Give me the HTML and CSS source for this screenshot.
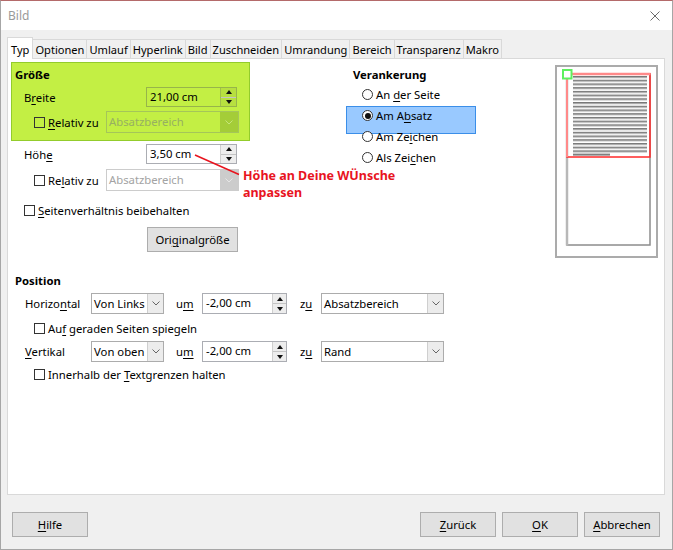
FILE: index.html
```html
<!DOCTYPE html>
<html lang="de">
<head>
    <meta charset="UTF-8">
    <meta name="viewport" content="width=device-width, initial-scale=1.0">
    <title>Bild</title>
    <link rel="stylesheet" href="styles.css">
</head>
<body>
    <div class="dialog">
        <div class="titlebar">
            <span class="title">Bild</span>
            <svg class="close" viewBox="0 0 10 10">
                <path d="M0.5 0.5L9.5 9.5M9.5 0.5L0.5 9.5" stroke="#6b6b6b" stroke-width="1"/>
            </svg>
        </div>

        <div class="tabs">
            <div class="tab active">Typ</div>
            <div class="tab">Optionen</div>
            <div class="tab">Umlauf</div>
            <div class="tab">Hyperlink</div>
            <div class="tab">Bild</div>
            <div class="tab">Zuschneiden</div>
            <div class="tab">Umrandung</div>
            <div class="tab">Bereich</div>
            <div class="tab">Transparenz</div>
            <div class="tab">Makro</div>
        </div>

        <div class="panel">
            <div class="top">
                <!-- Größe -->
                <div class="size-col">
                    <div class="highlight">
                        <div class="heading">Größe</div>
                        <div class="row">
                            <span class="lbl">B<u>r</u>eite</span>
                            <div class="spin">
                                <span class="spin-val">21,00 cm</span>
                                <span class="spin-btns"><i class="up"></i><i class="down"></i></span>
                            </div>
                        </div>
                        <div class="row sub">
                            <span class="check-lbl"><span class="box"></span><span><u>R</u>elativ zu</span></span>
                            <div class="select disabled wide">
                                <span class="select-val">Absatzbereich</span>
                                <span class="select-arrow"><svg viewBox="0 0 8 5"><path d="M0.5 0.5L4 4L7.5 0.5"/></svg></span>
                            </div>
                        </div>
                    </div>

                    <div class="row outer hoehe">
                        <span class="lbl">Höh<u>e</u></span>
                        <div class="spin">
                            <span class="spin-val">3,50 cm</span>
                            <span class="spin-btns"><i class="up"></i><i class="down"></i></span>
                        </div>
                    </div>
                    <div class="row outer sub rel2">
                        <span class="check-lbl"><span class="box"></span><span>Re<u>l</u>ativ zu</span></span>
                        <div class="select disabled wide">
                            <span class="select-val">Absatzbereich</span>
                            <span class="select-arrow"><svg viewBox="0 0 8 5"><path d="M0.5 0.5L4 4L7.5 0.5"/></svg></span>
                        </div>
                    </div>
                    <div class="check-row ratio"><span class="box"></span><span><u>S</u>eitenverhältnis beibehalten</span></div>
                    <button class="btn orig">Ori<u>g</u>inalgröße</button>
                </div>

                <!-- Verankerung -->
                <div class="anchor-col">
                    <div class="heading">Verankerung</div>
                    <div class="radios">
                        <div class="radio"><span class="circle"></span><span>An <u>d</u>er Seite</span></div>
                        <div class="radio selected"><span class="circle"></span><span>Am A<u>b</u>satz</span></div>
                        <div class="radio"><span class="circle"></span><span>Am Ze<u>i</u>chen</span></div>
                        <div class="radio"><span class="circle"></span><span>Als Zei<u>c</u>hen</span></div>
                    </div>
                </div>

                <!-- Vorschau -->
                <div class="preview">
                    <svg width="103" height="193" viewBox="0 0 103 193">
                        <defs>
                            <pattern id="lines" x="0" y="11" width="4" height="3.72" patternUnits="userSpaceOnUse">
                                <rect x="0" y="0" width="4" height="1.6" fill="#777"/>
                                <rect x="0" y="1.6" width="4" height="0.6" fill="#bbb"/>
                            </pattern>
                        </defs>
                        <rect x="1" y="1" width="101" height="191" fill="#fff" stroke="#ababab" stroke-width="2"/>
                        <rect x="12" y="9" width="83" height="171" fill="#fff" stroke="#8c8c8c" stroke-width="1.5"/>
                        <line x1="12" y1="9" x2="12" y2="180.5" stroke="#b8b8b8" stroke-width="2.5"/>
                        <rect x="18" y="11" width="74" height="77" fill="url(#lines)"/>
                        <rect x="18" y="88.6" width="37" height="2" fill="#7f7f7f"/>
                        <rect x="12" y="9" width="83" height="83" fill="none" stroke="#ff2a2a" stroke-width="1.5"/>
                        <line x1="11.5" y1="9" x2="95.5" y2="9" stroke="#ff8a8a" stroke-width="2.5"/>
                        <line x1="12" y1="9" x2="12" y2="92" stroke="#ff8a8a" stroke-width="2"/>
                        <rect x="8" y="5" width="8.5" height="8.5" fill="#fff" stroke="#5ef05e" stroke-width="2"/>
                    </svg>
                </div>
            </div>

            <!-- Position -->
            <div class="position">
                <div class="heading">Position</div>
                <div class="pos-row">
                    <span class="pos-lbl">Horizo<u>n</u>tal</span>
                    <div class="select small">
                        <span class="select-val">Von Links</span>
                        <span class="select-arrow"><svg viewBox="0 0 8 5"><path d="M0.5 0.5L4 4L7.5 0.5"/></svg></span>
                    </div>
                    <span class="um">u<u>m</u></span>
                    <div class="spin pos-spin">
                        <span class="spin-val">-2,00 cm</span>
                        <span class="spin-btns"><i class="up"></i><i class="down"></i></span>
                    </div>
                    <span class="zu">z<u>u</u></span>
                    <div class="select large">
                        <span class="select-val">Absatzbereich</span>
                        <span class="select-arrow"><svg viewBox="0 0 8 5"><path d="M0.5 0.5L4 4L7.5 0.5"/></svg></span>
                    </div>
                </div>
                <div class="check-row sub-check"><span class="box"></span><span>Au<u>f</u> geraden Seiten spiegeln</span></div>
                <div class="pos-row">
                    <span class="pos-lbl"><u>V</u>ertikal</span>
                    <div class="select small">
                        <span class="select-val">Von oben</span>
                        <span class="select-arrow"><svg viewBox="0 0 8 5"><path d="M0.5 0.5L4 4L7.5 0.5"/></svg></span>
                    </div>
                    <span class="um">u<u>m</u></span>
                    <div class="spin pos-spin">
                        <span class="spin-val">-2,00 cm</span>
                        <span class="spin-btns"><i class="up"></i><i class="down"></i></span>
                    </div>
                    <span class="zu">z<u>u</u></span>
                    <div class="select large">
                        <span class="select-val">Rand</span>
                        <span class="select-arrow"><svg viewBox="0 0 8 5"><path d="M0.5 0.5L4 4L7.5 0.5"/></svg></span>
                    </div>
                </div>
                <div class="check-row sub-check last"><span class="box"></span><span>Innerhalb der <u>T</u>extgrenzen halten</span></div>
            </div>

            <!-- Anmerkung -->
            <svg class="note-line" viewBox="0 0 55 30">
                <path d="M5 5L49 24.5" stroke="#e8141e" stroke-width="1.5"/>
            </svg>
            <div class="note">Höhe an Deine WÜnsche<br>anpassen</div>
        </div>

        <div class="footer">
            <button class="btn"><u>H</u>ilfe</button>
            <div class="footer-right">
                <button class="btn"><u>Z</u>urück</button>
                <button class="btn"><u>O</u>K</button>
                <button class="btn"><u>A</u>bbrechen</button>
            </div>
        </div>
    </div>
</body>
</html>
```

FILE: styles.css
```css
:root {
    --panel-border: #d9d9d9;
    --field-border: #abadb3;
    --green: #c3ef44;
    --green-border: #93cc2c;
    --blue: #99c9ff;
    --blue-border: #3b8ee8;
    --note-red: #e8141e;
}

* {
    margin: 0;
    padding: 0;
    box-sizing: border-box;
}

body {
    background: #f0f0f0;
    font-family: "Noto Sans", "DejaVu Sans", sans-serif;
    font-size: 11.3px;
    color: #000;
}

u {
    text-decoration-thickness: 1px;
    text-underline-offset: 2px;
}

.dialog {
    width: 673px;
    height: 550px;
    border: 1px solid #a6a6a6;
    border-top-color: #b46a6a;
    background: #f0f0f0;
    display: flex;
    flex-direction: column;
}

.titlebar {
    height: 29px;
    flex-shrink: 0;
    background: #fff;
    display: flex;
    align-items: center;
    justify-content: space-between;
    padding: 0 12px 0 7px;
}

.title {
    color: #9a9a9a;
    font-size: 12px;
}

.close {
    width: 10px;
    height: 10px;
}

/* Reiter */
.tabs {
    height: 21px;
    margin-top: 7px;
    padding-left: 6px;
    display: flex;
    align-items: flex-end;
    flex-shrink: 0;
    font-size: 11.1px;
}

.tab {
    height: 19px;
    padding: 2px 2px 0;
    line-height: 16px;
    border: 1px solid var(--panel-border);
    border-bottom: none;
    margin-left: -1px;
    background: #f0f0f0;
    white-space: nowrap;
}

.tab:first-child {
    margin-left: 0;
}

.tab.active {
    height: 22px;
    padding: 4px 3px 0;
    margin-bottom: -1px;
    background: #fff;
    position: relative;
    z-index: 1;
}

.panel {
    position: relative;
    height: 437px;
    flex-shrink: 0;
    margin: 0 7px 0 6px;
    background: #fff;
    border: 1px solid var(--panel-border);
}

.top {
    display: flex;
    align-items: flex-start;
}

.heading {
    font-weight: bold;
    line-height: 16px;
}

/* Größe */
.size-col {
    width: 338px;
}

.highlight {
    width: 239px;
    height: 79px;
    margin: 3px 0 0 3px;
    background: var(--green);
    border: 1px solid var(--green-border);
}

.highlight .heading {
    padding: 4px 0 0 3px;
}

.row {
    display: flex;
    align-items: center;
    padding-left: 12px;
    margin-top: 4px;
}

.row.sub {
    padding-left: 22px;
}

.row.outer {
    padding-left: 16px;
}

.row.outer.sub {
    padding-left: 26px;
}

.row.hoehe {
    margin-top: 3px;
}

.row.rel2 {
    margin-top: 5px;
}

.lbl {
    width: 122px;
}

.check-lbl {
    width: 72px;
    display: flex;
    align-items: center;
    white-space: nowrap;
}

.box {
    width: 11px;
    height: 11px;
    border: 1px solid #333;
    background: #fff;
    margin-right: 3px;
    flex-shrink: 0;
}

.highlight .box {
    background: transparent;
}

.check-row {
    height: 18px;
    display: flex;
    align-items: center;
    white-space: nowrap;
}

.check-row.ratio {
    margin-top: 10px;
    padding-left: 16px;
}

/* Eingabefelder */
.spin {
    display: flex;
    width: 91px;
    height: 20px;
    border: 1px solid var(--field-border);
    background: #fff;
}

.spin-val {
    flex: 1;
    padding-left: 3px;
    line-height: 18px;
}

.spin-btns {
    width: 16px;
    display: flex;
    flex-direction: column;
    border-left: 1px solid #cfcfcf;
}

.spin-btns i {
    flex: 1;
    display: flex;
    align-items: center;
    justify-content: center;
    background: #ededed;
}

.spin-btns i::after {
    content: "";
    border-left: 3.5px solid transparent;
    border-right: 3.5px solid transparent;
}

.spin-btns .up::after {
    border-bottom: 4px solid #111;
}

.spin-btns .down {
    border-top: 1px solid #c4c4c4;
}

.spin-btns .down::after {
    border-top: 4px solid #111;
}

.highlight .spin {
    background: transparent;
    border-color: #97b54a;
}

.highlight .spin-btns {
    border-left-color: #9fbf4a;
}

.highlight .spin-btns i {
    background: rgba(0, 0, 0, 0.06);
}

.select {
    display: flex;
    height: 21px;
    border: 1px solid #acacac;
    background: #fff;
}

.select.wide {
    width: 133px;
    height: 22px;
}

.select-val {
    flex: 1;
    padding-left: 2px;
    line-height: 19px;
    white-space: nowrap;
    overflow: hidden;
}

.select-arrow {
    width: 16px;
    border-left: 1px solid #cfcfcf;
    background: #ececec;
    display: flex;
    align-items: center;
    justify-content: center;
}

.select-arrow svg {
    width: 8px;
    height: 5px;
    fill: none;
    stroke: #666;
}

.select.disabled {
    border-color: #cccccc;
    color: #a3a3a3;
}

.select.disabled .select-arrow {
    background: #cccccc;
    width: 18px;
    border-left: none;
}

.select.disabled .select-arrow svg {
    stroke: #e6e6e6;
}

.highlight .select.disabled {
    background: transparent;
    border-color: #a5c659;
    color: #97b062;
}

.highlight .select.disabled .select-arrow {
    background: #a4cd38;
}

.highlight .select.disabled .select-arrow svg {
    stroke: #c6e57a;
}

.btn {
    width: 76px;
    height: 25px;
    background: #e1e1e1;
    border: 1px solid #adadad;
    font-family: inherit;
    font-size: 11.3px;
    color: #000;
}

.btn.orig {
    display: block;
    width: 91px;
    margin: 8px 0 0 139px;
}

/* Verankerung */
.anchor-col {
    width: 128px;
}

.anchor-col .heading {
    padding: 8px 0 0 7px;
}

.radios {
    position: relative;
    z-index: 0;
    margin-top: 1px;
}

.radio {
    position: relative;
    height: 21px;
    padding-left: 16px;
    display: flex;
    align-items: center;
    white-space: nowrap;
}

.radio.selected::before {
    content: "";
    position: absolute;
    z-index: -1;
    left: 0;
    top: 1px;
    width: 128px;
    height: 26px;
    background: var(--blue);
    border: 1px solid var(--blue-border);
}

.circle {
    width: 11px;
    height: 11px;
    border: 1px solid #333;
    border-radius: 50%;
    background: #fff;
    margin-right: 3px;
    display: flex;
    align-items: center;
    justify-content: center;
}

.radio.selected .circle::after {
    content: "";
    width: 6px;
    height: 6px;
    border-radius: 50%;
    background: #111;
}

.preview {
    margin: 6px 6px 0 auto;
    height: 193px;
}

.preview svg {
    display: block;
}

/* Position */
.position {
    margin-top: 15px;
}

.position .heading {
    padding-left: 7px;
}

.pos-row {
    display: flex;
    align-items: center;
    padding-left: 17px;
    margin-top: 4px;
}

.pos-row + .check-row {
    margin-top: 5px;
}

.check-row + .pos-row {
    margin-top: 4px;
}

.check-row.sub-check {
    padding-left: 26px;
}

.check-row.last {
    margin-top: 3px;
}

.pos-lbl {
    width: 66px;
}

.select.small {
    width: 73px;
}

.select.large {
    width: 123px;
}

.um {
    width: 26px;
    margin-left: 12px;
}

.zu {
    width: 21px;
    margin-left: 13px;
}

.spin.pos-spin {
    width: 85px;
    height: 21px;
}

.pos-spin .spin-btns {
    width: 14px;
}

/* Anmerkung */
.note-line {
    position: absolute;
    left: 182px;
    top: 91px;
    width: 55px;
    height: 30px;
}

.note {
    position: absolute;
    left: 235px;
    top: 108px;
    color: var(--note-red);
    font-weight: bold;
    font-size: 12.5px;
    line-height: 17px;
    white-space: nowrap;
}

/* Fußleiste */
.footer {
    display: flex;
    justify-content: space-between;
    padding: 17px 12px 0 11px;
}

.footer-right {
    display: flex;
    gap: 6px;
}
```
